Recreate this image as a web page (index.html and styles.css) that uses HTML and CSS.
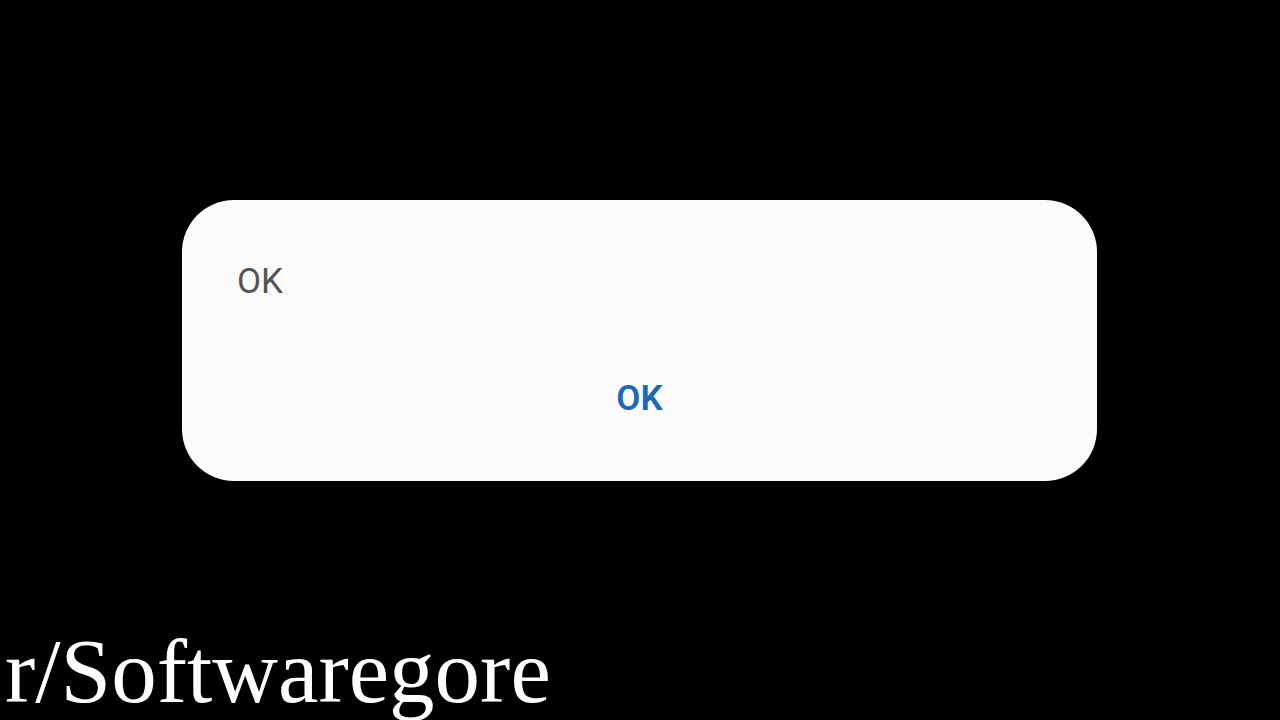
FILE: index.html
```html
<!DOCTYPE html>
<html lang="en">
<head>
    <meta charset="UTF-8">
    <meta name="viewport" content="width=device-width, initial-scale=1.0">
    <title>OK</title>
    <link rel="stylesheet" href="styles.css">
</head>
<body>
    <div class="screen">
        <div class="dialog">
            <div class="dialog-title">OK</div>
            <div class="dialog-actions">
                <button class="dialog-button" type="button">OK</button>
            </div>
        </div>
        <div class="caption">r/Softwaregore</div>
    </div>
</body>
</html>
```

FILE: styles.css
```css
body {
    background-color: #000; /* black backdrop */
    margin: 0;
    font-family: Roboto, "Noto Sans", sans-serif;
}

.screen {
    height: 720px;
    display: flex;
    flex-direction: column;
    padding-top: 200px;
    box-sizing: border-box;
}

.dialog {
    width: 915px;
    height: 281px;
    margin-left: 182px;
    background-color: #fcfcfc;
    border-radius: 52px;
    box-sizing: border-box;
    padding: 64px 55px 0 55px;
}

.dialog-title {
    color: #555;
    font-size: 35px;
    line-height: 35px;
}

.dialog-actions {
    margin-top: 82px;
    display: flex;
    justify-content: center;
}

.dialog-button {
    border: none;
    background: none;
    padding: 0;
    color: #1a6ab8;
    font-family: Roboto, "Noto Sans", sans-serif;
    font-weight: 600;
    font-size: 35px;
    line-height: 35px;
    cursor: pointer;
}

.caption {
    margin-top: auto;
    padding-left: 5px;
    color: #fff;
    font-family: "Liberation Serif", "Times New Roman", serif;
    font-size: 91px;
    line-height: 91px;
    margin-bottom: 3px;
}
```
